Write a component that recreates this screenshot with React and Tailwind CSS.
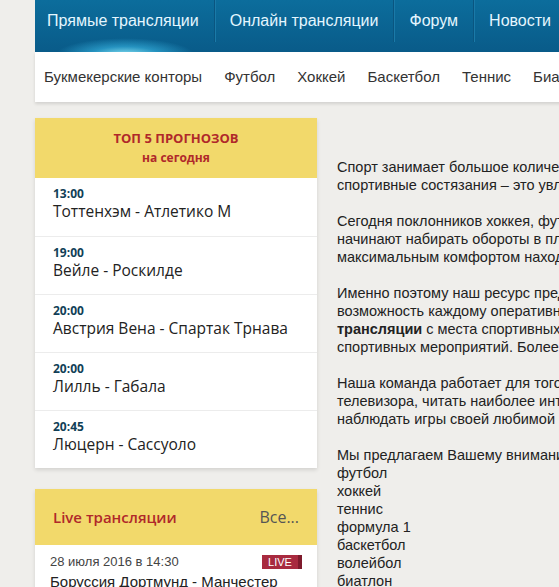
import React from "react";

const NAV = ["Прямые трансляции", "Онлайн трансляции", "Форум", "Новости", "Статьи"];
const SUBNAV = ["Букмекерские конторы", "Футбол", "Хоккей", "Баскетбол", "Теннис", "Биатлон", "Формула 1", "Волейбол"];

const TOP5 = [
  { time: "13:00", match: "Тоттенхэм - Атлетико М" },
  { time: "19:00", match: "Вейле - Роскилде" },
  { time: "20:00", match: "Австрия Вена - Спартак Трнава" },
  { time: "20:00", match: "Лилль - Габала" },
  { time: "20:45", match: "Люцерн - Сассуоло" },
];

const SPORTS = ["футбол", "хоккей", "теннис", "формула 1", "баскетбол", "волейбол", "биатлон", "бокс"];

function TopNav() {
  return (
    <div className="relative h-[52px] overflow-hidden bg-gradient-to-b from-[#0c6d9c] to-[#095b89]">
      {/* glow under the active tab */}
      <div className="absolute left-[20px] top-[38px] h-[34px] w-[140px] rounded-full bg-[radial-gradient(ellipse_at_center,rgba(150,240,255,0.9)_0%,rgba(60,190,235,0.55)_35%,rgba(20,120,180,0)_70%)]" />
      <div className="relative flex h-[42px]">
        {NAV.map((item, i) => (
          <div
            key={item}
            className={`flex items-center whitespace-nowrap border-r border-r-[#0a5580] shadow-[1px_0_0_#1a7aa8] text-[16px] text-[#e4f6ff] ${i === 0 ? "pl-[12px] pr-[15px]" : "px-[15px]"}`}
          >
            {item}
          </div>
        ))}
      </div>
    </div>
  );
}

function SubNav() {
  return (
    <div className="flex h-[50px] items-center gap-[22px] bg-white pl-[9px] text-[15px] text-[#333] shadow-[0_2px_3px_rgba(0,0,0,0.12)]">
      {SUBNAV.map((s) => (
        <span key={s} className="whitespace-nowrap">
          {s}
        </span>
      ))}
    </div>
  );
}

function TopForecasts() {
  return (
    <div className="bg-white shadow-[0_2px_4px_rgba(0,0,0,0.12)]">
      <div className="flex h-[60px] flex-col items-center justify-center bg-[#f2d96b] font-['Open_Sans',sans-serif] font-bold text-[#b0282a]">
        <div className="text-[13px] leading-[20px]">ТОП 5 ПРОГНОЗОВ</div>
        <div className="text-[12px] leading-[20px]">на сегодня</div>
      </div>
      {TOP5.map((r, i) => (
        <div key={i} className={`h-[58px] pl-[18px] pt-[8px] ${i > 0 ? "border-t border-[#ececec]" : ""}`}>
          <div className="font-['Open_Sans',sans-serif] text-[12px] font-bold leading-[16px] text-[#113f57]">{r.time}</div>
          <div className="font-['Open_Sans',sans-serif] text-[15.5px] leading-[19px] text-[#222]">{r.match}</div>
        </div>
      ))}
    </div>
  );
}

function LiveBox() {
  return (
    <div className="mt-[21px] bg-white shadow-[0_2px_4px_rgba(0,0,0,0.12)]">
      <div className="flex h-[56px] items-center justify-between bg-[#f2d96b] pl-[18px] pr-[18px] font-['Open_Sans',sans-serif]">
        <span className="text-[15px] font-semibold text-[#b0282a]">Live трансляции</span>
        <span className="text-[16px] text-[#555]">Все...</span>
      </div>
      <div className="px-[15px] pt-[9px] pb-[10px]">
        <div className="flex items-center justify-between">
          <span className="text-[13px] leading-[16px] text-[#444]">28 июля 2016 в 14:30</span>
          <span className="flex h-[14px] w-[40px] items-center justify-center border-r-[4px] border-r-[#7e1a2c] bg-[#a82a3f] text-[11px] leading-none text-white">
            LIVE
          </span>
        </div>
        <div className="mt-[2px] text-[15px] leading-[20px] text-[#222]">Боруссия Дортмунд - Манчестер Сити</div>
      </div>
    </div>
  );
}

function Article() {
  return (
    <div className="w-[640px] shrink-0 pt-[40px] text-[14.5px] leading-[18px] text-[#222] whitespace-nowrap">
      <p className="mb-[18px]">
        Спорт занимает большое количество времени в жизни многих людей, а
        <br />
        спортивные состязания – это увлекательное зрелище для миллионов.
      </p>
      <p className="mb-[18px]">
        Сегодня поклонников хоккея, футбола, тенниса и других видов спорта
        <br />
        начинают набирать обороты в плане возможности смотреть матчи с
        <br />
        максимальным комфортом находясь дома или на работе.
      </p>
      <p className="mb-[18px]">
        Именно поэтому наш ресурс предоставляет уникальную
        <br />
        возможность каждому оперативно смотреть прямые и онлайн
        <br />
        <b>трансляции</b> с места спортивных событий, а также анонсы
        <br />
        спортивных мероприятий. Более того, у нас есть прогнозы.
      </p>
      <p className="mb-[18px]">
        Наша команда работает для того, чтобы вы могли не зависеть от
        <br />
        телевизора, читать наиболее интересные новости спорта и
        <br />
        наблюдать игры своей любимой команды в любое время.
      </p>
      <p>Мы предлагаем Вашему вниманию трансляции по таким видам спорта:</p>
      {SPORTS.map((s) => (
        <div key={s}>{s}</div>
      ))}
    </div>
  );
}

export default function App() {
  return (
    <div className="h-screen w-screen overflow-hidden bg-[#efeeeb] font-['Liberation_Sans',Arial,sans-serif]">
      <div className="ml-[35px] w-[980px]">
        <TopNav />
        <SubNav />
        <div className="mt-[16px] flex gap-[20px]">
          <div className="w-[282px] shrink-0">
            <TopForecasts />
            <LiveBox />
          </div>
          <Article />
        </div>
      </div>
    </div>
  );
}
